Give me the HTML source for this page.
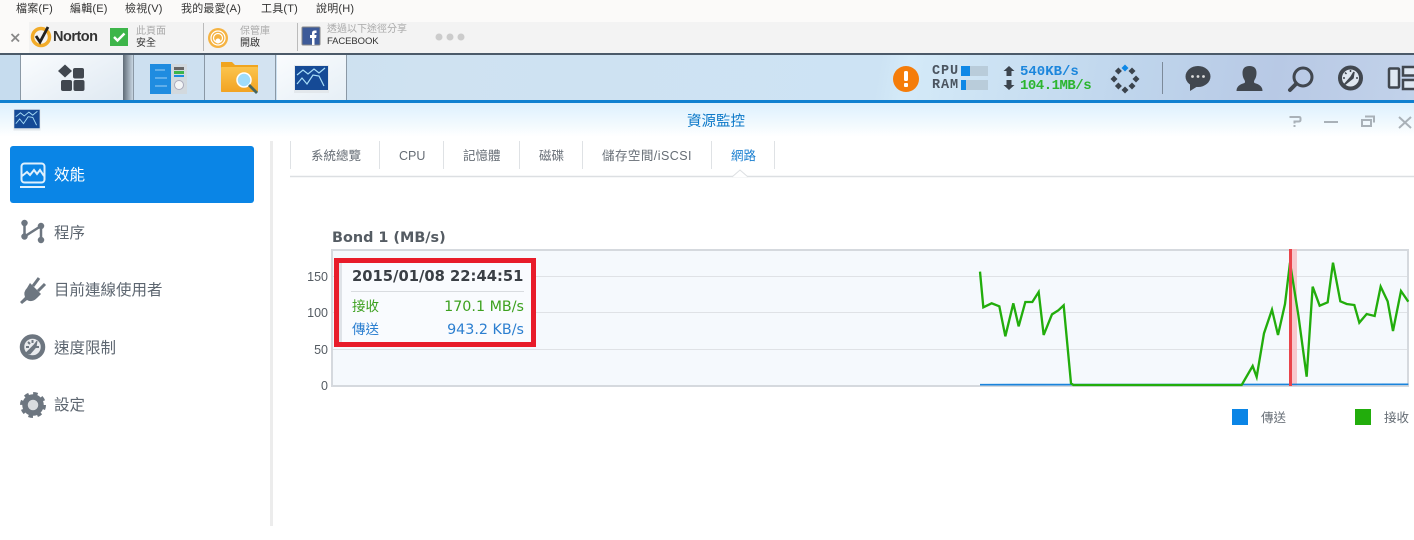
<!DOCTYPE html>
<html><head><meta charset="utf-8">
<style>
*{margin:0;padding:0;box-sizing:border-box}
html,body{width:1414px;height:540px;overflow:hidden;background:#fff}
body{position:relative;font-family:"Liberation Sans","Noto Sans CJK TC",sans-serif;color:#555}
.t{position:absolute;white-space:nowrap;line-height:1}
.b{position:absolute}
.m{font-size:11px;color:#333;top:4px;letter-spacing:.2px}
.s{font-size:15.500px;color:#5d6670}
.tab{font-size:12.500px;color:#666d75;top:150px}
.y{font-size:12.500px;color:#555c63;right:1086px}
.sp{font-family:"Liberation Mono",monospace;font-weight:bold;font-size:14px}
</style></head><body>
<div class="b" style="left:0;top:0;width:1414px;height:22px;background:#fbfaf9"></div>
<div class="b" style="left:0;top:22px;width:1414px;height:31px;background:#f3f3f3"></div>
<div class="b" style="left:0;top:22px;width:29px;height:31px;background:#fbfaf9"></div>
<div class="b" style="left:0;top:53px;width:1414px;height:2px;background:#4b5a69"></div>
<div class="b" style="left:0;top:55px;width:1414px;height:45px;background:linear-gradient(100deg,#c6dcee 0,#cfe2f1 30%,#cde3f4 62%,#d4eaf8 64%,#bfd5ec 80%,#b8c9e5 90%,#c2d2ea 100%)"></div>
<div class="b" style="left:0;top:100px;width:1414px;height:3px;background:#0f80d0"></div>
<div class="b" style="left:0;top:103px;width:1414px;height:34px;background:linear-gradient(#dcf0fd,#fff)"></div>

<span class="t m" style="left:16px">檔案(F)</span>
<span class="t m" style="left:70px">編輯(E)</span>
<span class="t m" style="left:125px">檢視(V)</span>
<span class="t m" style="left:181px">我的最愛(A)</span>
<span class="t m" style="left:261px">工具(T)</span>
<span class="t m" style="left:316px">說明(H)</span>

<svg class="b" style="left:0;top:22px" width="480" height="32" viewBox="0 22 480 32">
<path d="M11.500 34l7.500 7.500M19 34l-7.500 7.500" stroke="#888" stroke-width="1.800" fill="none"/>
<circle cx="41" cy="37" r="8.500" fill="none" stroke="#f2ac2a" stroke-width="3.500"/>
<path d="M36 36l4 6 8-15" fill="none" stroke="#222" stroke-width="2.800"/>
<rect x="110" y="28" width="18" height="18" fill="#3db54a"/>
<path d="M114 37l3.500 3.500 7-7" fill="none" stroke="#fff" stroke-width="2.400"/>
<line x1="203.500" y1="23" x2="203.500" y2="51" stroke="#bbb"/>
<circle cx="218" cy="38" r="10" fill="#f5b342"/><circle cx="218" cy="38" r="7" fill="none" stroke="#fff" stroke-width="1.200"/><circle cx="218" cy="38" r="4.500" fill="none" stroke="#fff" stroke-width="1.200"/><circle cx="218" cy="41" r="2.500" fill="#fff"/>
<line x1="297.500" y1="23" x2="297.500" y2="51" stroke="#bbb"/>
<rect x="302" y="27" width="18" height="18" rx="1" fill="#3d5a98" stroke="#888"/>
<path d="M312 45v-7h-2v-3h2v-2q0-2.500 3-2.500h1.500v2.500h-1.200q-.8 0-.8 1v1h2l-.4 3h-1.600v7z" fill="#fff"/>
<circle cx="439" cy="37" r="3.500" fill="#ccc"/><circle cx="450" cy="37" r="3.500" fill="#ccc"/><circle cx="461" cy="37" r="3.500" fill="#ccc"/>
</svg>
<span class="t" style="left:53px;top:30px;font-size:14.500px;font-weight:bold;color:#333;letter-spacing:-.5px">Norton</span>
<span class="t" style="left:136px;top:27px;font-size:10px;color:#aaa">此頁面</span>
<span class="t" style="left:136px;top:39px;font-size:10px;color:#333">安全</span>
<span class="t" style="left:240px;top:27px;font-size:10px;color:#aaa">保管庫</span>
<span class="t" style="left:240px;top:39px;font-size:10px;color:#333">開啟</span>
<span class="t" style="left:327px;top:25px;font-size:10px;color:#aaa">透過以下途徑分享</span>
<span class="t" style="left:327px;top:37px;font-size:9.500px;color:#333;letter-spacing:-.1px">FACEBOOK</span>

<!-- taskbar tabs -->
<div class="b" style="left:20px;top:55px;width:103px;height:45px;background:linear-gradient(150deg,#fafcfe,#dfe9f2);border-left:1px solid #8a98a5;"></div>
<div class="b" style="left:123px;top:55px;width:10px;height:45px;background:linear-gradient(90deg,#5f6b76,#c8d6e2)"></div>
<div class="b" style="left:133px;top:55px;width:72px;height:45px;background:#cde0f0;border-left:1px solid #8a98a5;border-right:1px solid #8a98a5"></div>
<div class="b" style="left:205px;top:55px;width:71px;height:45px;background:#d3e3f1;border-right:1px solid #8a98a5"></div>
<div class="b" style="left:277px;top:55px;width:70px;height:45px;background:linear-gradient(150deg,#fafcfe,#e6eff6);border-right:1px solid #8a98a5"></div>

<svg class="b" style="left:0;top:0" width="1414" height="140">
<defs><g id="mon"><rect x="0" y="0" width="35" height="28" fill="#e3e8ec"/><rect x="1" y="1" width="33" height="24" fill="#154a96"/><path d="M3 10l6-5 5 4 6-5 5 4 6-5M3 19l5-6 5 6 6-9 6 1 5 10" fill="none" stroke="#a8def8" stroke-width="1.200"/></g>
<linearGradient id="fo" x1="0" y1="0" x2="0" y2="1"><stop offset="0" stop-color="#fbc44d"/><stop offset="1" stop-color="#f2a322"/></linearGradient></defs>
<path d="M65 64.500l7 6.500-7 6.500-7-6.500z" fill="#41474f"/>
<rect x="73" y="68" width="11" height="10.500" rx="2" fill="#41474f"/><rect x="61" y="80" width="11" height="11" rx="2" fill="#41474f"/><rect x="73.500" y="80" width="11" height="11" rx="2" fill="#41474f"/>
<rect x="150" y="64" width="21" height="30" fill="#1f8ce0"/><rect x="171" y="64" width="16" height="30" fill="#d2d9de"/>
<rect x="174" y="67" width="10" height="3" fill="#666"/><rect x="174" y="71" width="10" height="3" fill="#3db54a"/><rect x="174" y="75" width="10" height="2" fill="#1f8ce0"/><circle cx="179" cy="85" r="4.500" fill="#f3f5f6" stroke="#aab"/>
<path d="M155 70h10M155 78h12M155 86h12" stroke="#9fd0f5" stroke-width="1"/>
<path d="M221 91v-29h11l3 3h23v26q0 1-1 1h-35q-1 0-1-1z" fill="#f0a51f"/><rect x="221" y="67" width="37" height="25" rx="1" fill="url(#fo)"/>
<circle cx="244" cy="80" r="7" fill="#9fdcfa" stroke="#fff" stroke-width="1.500"/><path d="M249 85l8 8" stroke="#45655f" stroke-width="2.800"/>
<use href="#mon" transform="translate(294,65)"/>
<g transform="translate(13.500,109) scale(.77)"><use href="#mon"/></g>

<circle cx="906" cy="79" r="13" fill="#f57d0a"/><rect x="904" y="71" width="4" height="10" rx="1.500" fill="#fff"/><rect x="904" y="83" width="4" height="4" rx="1" fill="#fff"/>
<rect x="961" y="66" width="27" height="10" fill="#b9ccda"/><rect x="961" y="66" width="9" height="10" fill="#0f88e6"/>
<rect x="961" y="80" width="27" height="10" fill="#b9ccda"/><rect x="961" y="80" width="5" height="10" fill="#0f88e6"/>
<path d="M1009 66l5.500 5h-3v5h-5v-5h-3z" fill="#3c444d"/><path d="M1009 90l5.500-5h-3v-5h-5v5h-3z" fill="#3c444d"/>
<g fill="#3c444d"><path d="M1125 64.500l3.500 3.500-3.500 3.500-3.500-3.500z" fill="#0f88e6"/><path d="M1118.400 67.500l3.500 3.500-3.500 3.500-3.500-3.500z"/><path d="M1132 67.500l3.500 3.500-3.500 3.500-3.500-3.500z"/><path d="M1114 75.500l3.500 3.500-3.500 3.500-3.500-3.500z"/><path d="M1136 75.500l3.500 3.500-3.500 3.500-3.500-3.500z"/><path d="M1118.400 82.500l3.500 3.500-3.500 3.500-3.500-3.500z"/><path d="M1132 82.500l3.500 3.500-3.500 3.500-3.500-3.500z"/><path d="M1125 86.500l3.500 3.500-3.500 3.500-3.500-3.500z"/></g>
<line x1="1162.500" y1="62" x2="1162.500" y2="94" stroke="#7c8a9a"/>
<ellipse cx="1198" cy="76.500" rx="12.500" ry="10.500" fill="#41474f"/><path d="M1190 83l0 8 8-5z" fill="#41474f"/><circle cx="1192.500" cy="76.500" r="1.400" fill="#ddd"/><circle cx="1198" cy="76.500" r="1.400" fill="#ddd"/><circle cx="1203.500" cy="76.500" r="1.400" fill="#ddd"/>
<path d="M1236.500 91q0-6 8-8 1-1 0-3-2-3-2-7 0-7 7-7t7 7q0 4-2 7-1 2 0 3 8 2 8 8z" fill="#41474f"/>
<circle cx="1303" cy="77" r="9" fill="none" stroke="#41474f" stroke-width="3"/><path d="M1296 84l-6 6" stroke="#41474f" stroke-width="4" stroke-linecap="round"/>
<circle cx="1350.500" cy="78" r="10.500" fill="#dfe7f0" stroke="#41474f" stroke-width="4"/><path d="M1344 85l7-8 3-5-1 6z" fill="#41474f" stroke="#41474f" stroke-width="1.500"/><path d="M1350.500 70v2M1343 78h2M1358 78h-2M1345 72.500l1.500 1.500" stroke="#41474f" stroke-width="1.500"/>
<rect x="1389" y="68.500" width="10" height="19" rx="1" fill="#dfe8f2" stroke="#41474f" stroke-width="2.500"/>
<rect x="1403" y="67" width="14" height="8.500" fill="#dfe8f2" stroke="#41474f" stroke-width="2.500"/><rect x="1403" y="80" width="14" height="9" fill="#dfe8f2" stroke="#41474f" stroke-width="2.500"/>
<path d="M1289.500 117h9.500q1.500 0 1.500 1.500v1.500q0 1.500-2 1.500h-4v2M1294.500 125v2" fill="none" stroke="#a9b1b8" stroke-width="2"/>
<path d="M1324 122h14" stroke="#a9b1b8" stroke-width="2"/>
<path d="M1362 120h9v6h-9zM1365 116.500h9v6" fill="none" stroke="#a9b1b8" stroke-width="2"/>
<path d="M1399 117l12 11M1411 117l-12 11" stroke="#a9b1b8" stroke-width="2"/>
</svg>
<span class="t sp" style="left:932px;top:65px;color:#4b5560;font-size:13.500px;letter-spacing:.9px">CPU</span>
<span class="t sp" style="left:932px;top:79px;color:#4b5560;font-size:13.500px;letter-spacing:.9px">RAM</span>
<span class="t sp" style="left:1020px;top:65px;color:#1c86dc">540KB/s</span>
<span class="t sp" style="left:1020px;top:79px;color:#2bb52e;letter-spacing:-.5px">104.1MB/s</span>
<span class="t" style="left:687px;top:115px;font-size:14.500px;color:#0b78c8">資源監控</span>

<!-- sidebar -->
<div class="b" style="left:10px;top:146px;width:243.500px;height:57px;background:#0a85e6;border-radius:3px"></div>
<div class="b" style="left:270px;top:141px;width:3px;height:385px;background:#ececec"></div>
<svg class="b" style="left:0;top:140px" width="60" height="290" viewBox="0 140 60 290">
<rect x="21.500" y="163.500" width="23" height="19" rx="3" fill="none" stroke="#dff0fd" stroke-width="2"/>
<path d="M22 176l5-4 3 3 4-5 3 4 3-4 4 6" fill="none" stroke="#dff0fd" stroke-width="2"/>
<rect x="20" y="186" width="25" height="2" fill="#dff0fd"/>
<g stroke="#6d7680" stroke-width="2.500" fill="#6d7680"><path d="M24.500 223v13.500L41 226v14" fill="none"/><circle cx="24.500" cy="223" r="2"/><circle cx="24.500" cy="236.500" r="2"/><circle cx="41" cy="226" r="2"/><circle cx="41" cy="240" r="2"/></g>
<path d="M30 283l11 11-4 4q-5 5-10 2l-5 4-2-2 5-5q-2-5 2-9z" fill="#6d7680"/>
<path d="M33 286l6-8M38 291l7-7" stroke="#6d7680" stroke-width="3"/>
<circle cx="32.500" cy="347" r="10.500" fill="#e9ebee" stroke="#6d7680" stroke-width="4.500"/><path d="M26 353l8-8 3-4-1 6-6 7z" fill="#6d7680" stroke="#6d7680"/>
<path d="M32.500 340v3M26 347h3M39 347h-3M28 342l2 2" stroke="#6d7680" stroke-width="2"/>
<circle cx="33" cy="405" r="8" fill="#d9dcdf" stroke="#6d7680" stroke-width="5.500"/><circle cx="33" cy="405" r="11.500" fill="none" stroke="#6d7680" stroke-width="3" stroke-dasharray="4.500 4.500"/>
</svg>
<span class="t s" style="left:54px;top:168px;color:#fff">效能</span>
<span class="t s" style="left:54px;top:226px">程序</span>
<span class="t s" style="left:54px;top:283px">目前連線使用者</span>
<span class="t s" style="left:54px;top:341px">速度限制</span>
<span class="t s" style="left:54px;top:398px">設定</span>

<!-- tabs -->
<svg class="b" style="left:285px;top:140px" width="1129" height="42" viewBox="285 140 1129 42">
<path d="M290 176.500H1414" stroke="#dcdfe2" stroke-width="1.500" fill="none"/>
<path d="M732 177l8-7 8 7" fill="#fff" stroke="#dcdfe2"/>
<g stroke="#dfe2e5"><path d="M290.500 141v28M379.500 141v28M443.500 141v28M519.500 141v28M582.500 141v28M711.500 141v28M774.500 141v28"/></g>
</svg>
<span class="t tab" style="left:311px">系統總覽</span>
<span class="t tab" style="left:399px">CPU</span>
<span class="t tab" style="left:463px">記憶體</span>
<span class="t tab" style="left:539px">磁碟</span>
<span class="t tab" style="left:602px;letter-spacing:.45px">儲存空間/iSCSI</span>
<span class="t tab" style="left:731px;color:#1a7fd0">網路</span>

<span class="t" style="left:332px;top:231px;font-weight:bold;font-family:'DejaVu Sans',sans-serif;font-size:14.400px;color:#555c63">Bond 1 (MB/s)</span>

<!-- chart -->
<div class="b" style="left:331px;top:249px;width:1078px;height:138px;background:#f5f9fd;border:2px solid #d5d9de"></div>
<div class="b" style="left:333px;top:276px;width:1074px;height:1px;background:#dfe2e6"></div>
<div class="b" style="left:333px;top:312px;width:1074px;height:1px;background:#dfe2e6"></div>
<div class="b" style="left:333px;top:349px;width:1074px;height:1px;background:#dfe2e6"></div>
<span class="t y" style="top:271px">150</span>
<span class="t y" style="top:307px">100</span>
<span class="t y" style="top:344px">50</span>
<span class="t y" style="top:380px">0</span>

<svg class="b" style="left:0;top:0" width="1414" height="400">
<rect x="1289" y="249" width="8" height="137" fill="#f9bcc0" opacity=".8"/>
<g transform="translate(960,240) scale(.33333)">
<path d="M60 434L1345 433" stroke="#1a84dc" stroke-width="5" fill="none"/>
<polyline fill="none" stroke="#22ad0c" stroke-width="7" points="60,95 70,202 95,190 118,199 136,289 160,190 176,259 196,186 217,186 236,156 251,285 276,223 295,211 311,196 333,430 340,435 845,435 878,378 890,411 912,280 936,209 954,285 975,192 990,68 1015,225 1040,410 1058,140 1079,197 1103,187 1119,68 1141,184 1160,192 1183,195 1198,248 1220,222 1244,228 1262,140 1283,184 1299,273 1323,153 1345,185"/>
</g>
<rect x="1289" y="249" width="3" height="137" fill="#e9444b"/>
</svg>

<!-- tooltip -->
<div class="b" style="left:334px;top:258px;width:202px;height:89px;background:#f9fbfe;border:5px solid #e81c2a"></div>
<div class="b" style="left:339px;top:263px;width:3px;height:79px;background:#dfe3e8"></div>
<div class="b" style="left:351px;top:291px;width:173px;height:1px;background:#d9dce0"></div>
<span class="t" style="left:352px;top:269.500px;font-weight:bold;font-family:'DejaVu Sans',sans-serif;font-size:14.750px;color:#3a3f45">2015/01/08 22:44:51</span>
<span class="t" style="left:352px;top:300px;font-size:13.500px;color:#3da11f">接收</span>
<span class="t" style="right:890px;top:300px;font-family:'DejaVu Sans',sans-serif;font-size:14.300px;color:#3da11f">170.1 MB/s</span>
<span class="t" style="left:352px;top:323px;font-size:13.500px;color:#2c7fd0">傳送</span>
<span class="t" style="right:890px;top:323px;font-size:14.300px;font-family:'DejaVu Sans',sans-serif;color:#2c7fd0">943.2 KB/s</span>

<!-- legend -->
<div class="b" style="left:1232px;top:409px;width:16px;height:16px;background:#0a85e6"></div>
<div class="b" style="left:1355px;top:409px;width:16px;height:16px;background:#22ad0c"></div>
<span class="t" style="left:1261px;top:412px;font-size:12.500px;color:#666d75">傳送</span>
<span class="t" style="left:1384px;top:412px;font-size:12.500px;color:#666d75">接收</span>
</body></html>
